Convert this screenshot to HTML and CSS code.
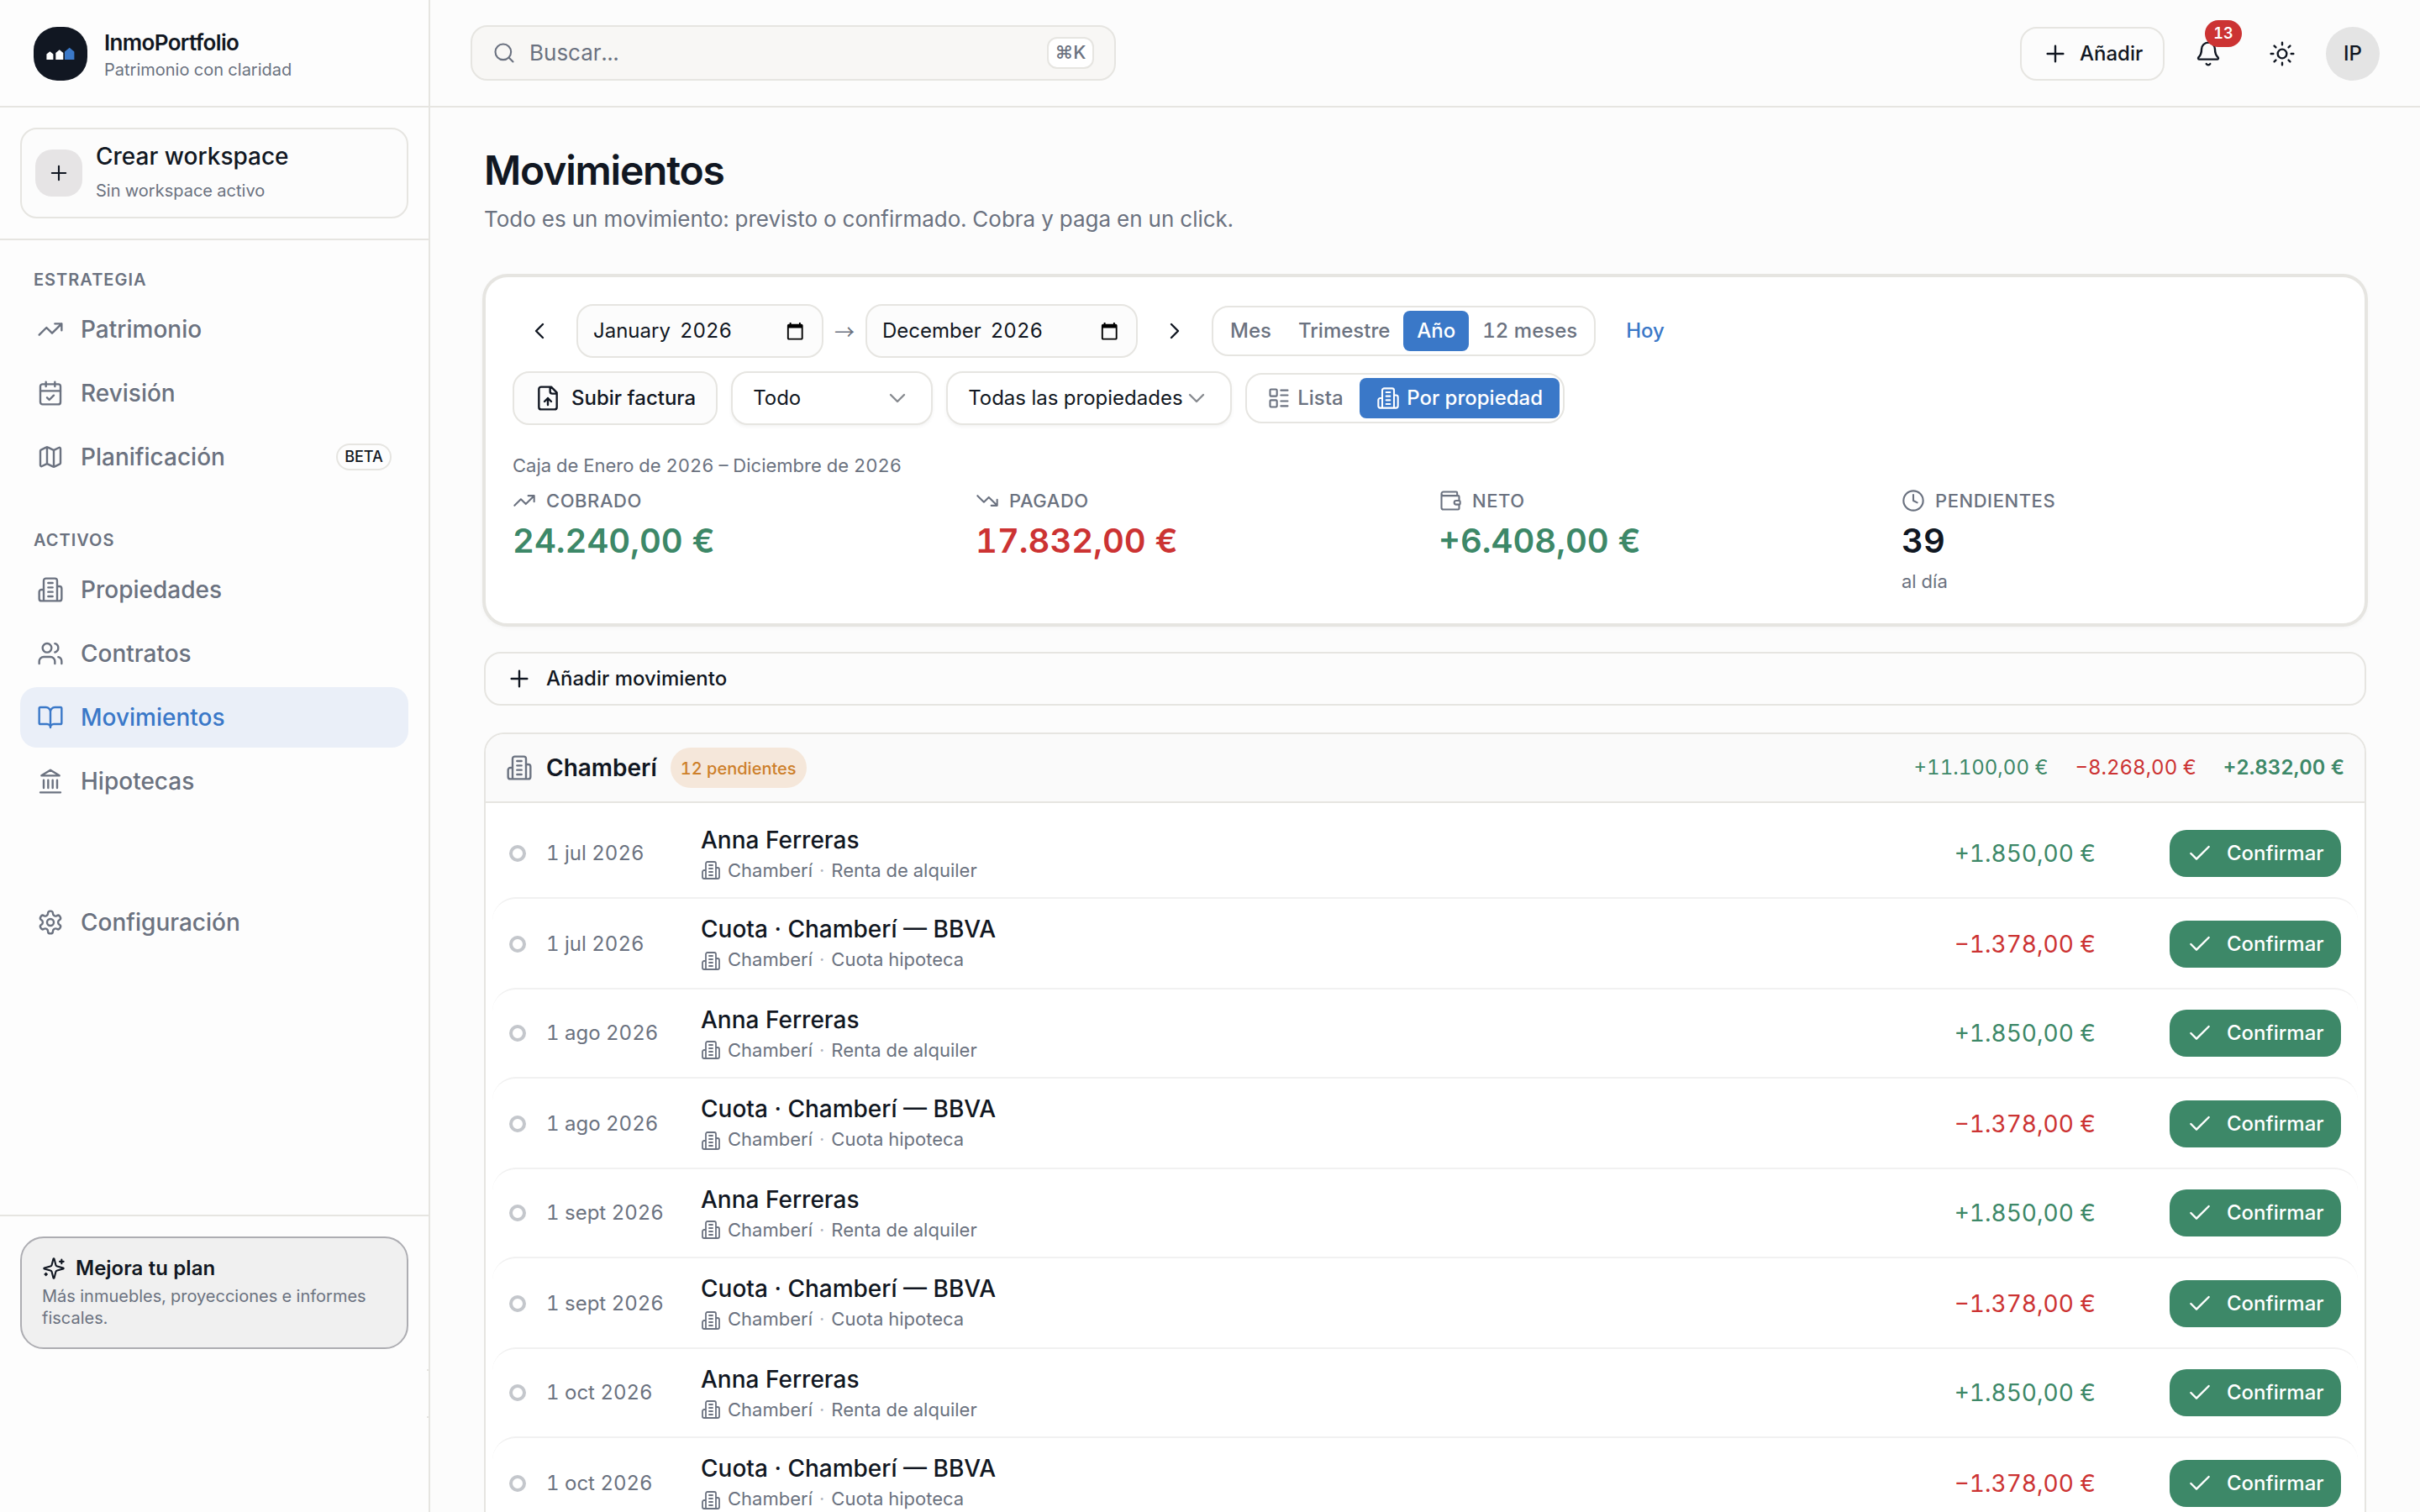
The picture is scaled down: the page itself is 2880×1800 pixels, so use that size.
FILE: index.html
```html
<!DOCTYPE html>
<html lang="es">
<head>
<meta charset="utf-8">
<title>InmoPortfolio</title>
<link rel="stylesheet" href="styles.css">
</head>
<body>
<svg class="sprite" aria-hidden="true">
  <symbol id="plus" viewBox="0 0 24 24"><path d="M5 12h14M12 5v14"/></symbol>
  <symbol id="trending-up" viewBox="0 0 24 24"><path d="M22 7l-8.5 8.5-5-5L2 17M16 7h6v6"/></symbol>
  <symbol id="trending-down" viewBox="0 0 24 24"><path d="M22 17l-8.5-8.5-5 5L2 7M16 17h6v-6"/></symbol>
  <symbol id="calendar-check" viewBox="0 0 24 24"><path d="M8 2v4M16 2v4M3 10h18M9 16l2 2 4-4"/><rect x="3" y="4" width="18" height="18" rx="2"/></symbol>
  <symbol id="map" viewBox="0 0 24 24"><path d="M14.106 5.553a2 2 0 0 0 1.788 0l3.659-1.83A1 1 0 0 1 21 4.619v12.764a1 1 0 0 1-.553.894l-4.553 2.277a2 2 0 0 1-1.788 0l-4.212-2.106a2 2 0 0 0-1.788 0l-3.659 1.83A1 1 0 0 1 3 19.381V6.618a1 1 0 0 1 .553-.894l4.553-2.277a2 2 0 0 1 1.788 0zM15 5.764v15M9 3.236v15"/></symbol>
  <symbol id="building" viewBox="0 0 24 24"><path d="M6 22V4a2 2 0 0 1 2-2h8a2 2 0 0 1 2 2v18ZM6 12H4a2 2 0 0 0-2 2v6a2 2 0 0 0 2 2h2M18 9h2a2 2 0 0 1 2 2v9a2 2 0 0 1-2 2h-2M10 6h4M10 10h4M10 14h4M10 18h4"/></symbol>
  <symbol id="users" viewBox="0 0 24 24"><path d="M16 21v-2a4 4 0 0 0-4-4H6a4 4 0 0 0-4 4v2M22 21v-2a4 4 0 0 0-3-3.87M16 3.13a4 4 0 0 1 0 7.75"/><circle cx="9" cy="7" r="4"/></symbol>
  <symbol id="book-open" viewBox="0 0 24 24"><path d="M12 7v14M3 18a1 1 0 0 1-1-1V4a1 1 0 0 1 1-1h5a4 4 0 0 1 4 4 4 4 0 0 1 4-4h5a1 1 0 0 1 1 1v13a1 1 0 0 1-1 1h-6a3 3 0 0 0-3 3 3 3 0 0 0-3-3z"/></symbol>
  <symbol id="landmark" viewBox="0 0 24 24"><path d="M3 22h18M6 18v-7M10 18v-7M14 18v-7M18 18v-7M12 2l8 5H4z"/></symbol>
  <symbol id="settings" viewBox="0 0 24 24"><path d="M12.22 2h-.44a2 2 0 0 0-2 2v.18a2 2 0 0 1-1 1.73l-.43.25a2 2 0 0 1-2 0l-.15-.08a2 2 0 0 0-2.73.73l-.22.38a2 2 0 0 0 .73 2.73l.15.1a2 2 0 0 1 1 1.72v.51a2 2 0 0 1-1 1.74l-.15.09a2 2 0 0 0-.73 2.73l.22.38a2 2 0 0 0 2.73.73l.15-.08a2 2 0 0 1 2 0l.43.25a2 2 0 0 1 1 1.73V20a2 2 0 0 0 2 2h.44a2 2 0 0 0 2-2v-.18a2 2 0 0 1 1-1.73l.43-.25a2 2 0 0 1 2 0l.15.08a2 2 0 0 0 2.73-.73l.22-.39a2 2 0 0 0-.73-2.73l-.15-.08a2 2 0 0 1-1-1.74v-.5a2 2 0 0 1 1-1.74l.15-.09a2 2 0 0 0 .73-2.73l-.22-.38a2 2 0 0 0-2.73-.73l-.15.08a2 2 0 0 1-2 0l-.43-.25a2 2 0 0 1-1-1.73V4a2 2 0 0 0-2-2z"/><circle cx="12" cy="12" r="3"/></symbol>
  <symbol id="sparkles" viewBox="0 0 24 24"><path d="M9.937 15.5A2 2 0 0 0 8.5 14.063l-6.135-1.582a.5.5 0 0 1 0-.962L8.5 9.936A2 2 0 0 0 9.937 8.5l1.582-6.135a.5.5 0 0 1 .963 0L14.063 8.5A2 2 0 0 0 15.5 9.937l6.135 1.581a.5.5 0 0 1 0 .964L15.5 14.063a2 2 0 0 0-1.437 1.437l-1.582 6.135a.5.5 0 0 1-.963 0zM20 3v4M22 5h-4M4 17v2M5 18H3"/></symbol>
  <symbol id="search" viewBox="0 0 24 24"><circle cx="11" cy="11" r="8"/><path d="m21 21-4.3-4.3"/></symbol>
  <symbol id="bell" viewBox="0 0 24 24"><path d="M10.268 21a2 2 0 0 0 3.464 0M3.262 15.326A1 1 0 0 0 4 17h16a1 1 0 0 0 .74-1.673C19.41 13.956 18 12.499 18 8A6 6 0 0 0 6 8c0 4.499-1.411 5.956-2.738 7.326"/></symbol>
  <symbol id="sun" viewBox="0 0 24 24"><circle cx="12" cy="12" r="4"/><path d="M12 2v2M12 20v2M4.93 4.93l1.41 1.41M17.66 17.66l1.41 1.41M2 12h2M20 12h2M6.34 17.66l-1.41 1.41M19.07 4.93l-1.41 1.41"/></symbol>
  <symbol id="chevron-left" viewBox="0 0 24 24"><path d="m15 18-6-6 6-6"/></symbol>
  <symbol id="chevron-right" viewBox="0 0 24 24"><path d="m9 18 6-6-6-6"/></symbol>
  <symbol id="chevron-down" viewBox="0 0 24 24"><path d="m6 9 6 6 6-6"/></symbol>
  <symbol id="calendar" viewBox="0 0 24 24"><path d="M20 3h-1V1h-2v2H7V1H5v2H4c-1.1 0-2 .9-2 2v16c0 1.1.9 2 2 2h16c1.1 0 2-.9 2-2V5c0-1.1-.9-2-2-2zm0 18H4V8h16v13z"/></symbol>
  <symbol id="file-up" viewBox="0 0 24 24"><path d="M15 2H6a2 2 0 0 0-2 2v16a2 2 0 0 0 2 2h12a2 2 0 0 0 2-2V7ZM14 2v4a2 2 0 0 0 2 2h4M12 12v6M15 15l-3-3-3 3"/></symbol>
  <symbol id="layout-list" viewBox="0 0 24 24"><rect x="3" y="3" width="7" height="7" rx="1"/><rect x="3" y="14" width="7" height="7" rx="1"/><path d="M14 4h7M14 9h7M14 15h7M14 20h7"/></symbol>
  <symbol id="wallet" viewBox="0 0 24 24"><path d="M19 7V4a1 1 0 0 0-1-1H5a2 2 0 0 0 0 4h15a1 1 0 0 1 1 1v4h-3a2 2 0 0 0 0 4h3a1 1 0 0 0 1-1v-2a1 1 0 0 0-1-1M3 5v14a2 2 0 0 0 2 2h15a1 1 0 0 0 1-1v-4"/></symbol>
  <symbol id="clock" viewBox="0 0 24 24"><circle cx="12" cy="12" r="10"/><path d="M12 6v6l4 2"/></symbol>
  <symbol id="check" viewBox="0 0 24 24"><path d="M20 6 9 17l-5-5"/></symbol>
</svg>

<div class="app">
  <aside class="sidebar">
    <div class="brand">
      <svg class="logo" viewBox="0 0 64 64"><rect width="64" height="64" rx="28" fill="#111722"/><path d="M15.4 39v-6.500l4-3.300 4 3.300V39z" fill="#fff"/><path d="M26.300 39v-8l4.500-3.700 4.500 3.700v8z" fill="#fff"/><path d="M37 39V29.500l5.700-4.700 5.700 4.700V39z" fill="#3a78c8"/></svg>
      <div class="brand-text"><div class="brand-name">InmoPortfolio</div><div class="brand-tag">Patrimonio con claridad</div></div>
    </div>
    <div class="workspace">
      <button class="workspace-card">
        <span class="workspace-icon"><svg class="i i28"><use href="#plus"/></svg></span>
        <span class="workspace-text"><span class="workspace-title">Crear workspace</span><span class="workspace-sub">Sin workspace activo</span></span>
      </button>
    </div>
    <nav class="nav">
      <div class="nav-heading">ESTRATEGIA</div>
      <a class="nav-item"><svg class="i i32"><use href="#trending-up"/></svg>Patrimonio</a>
      <a class="nav-item"><svg class="i i32"><use href="#calendar-check"/></svg>Revisión</a>
      <a class="nav-item"><svg class="i i32"><use href="#map"/></svg>Planificación<span class="beta">BETA</span></a>
      <div class="nav-heading second">ACTIVOS</div>
      <a class="nav-item"><svg class="i i32"><use href="#building"/></svg>Propiedades</a>
      <a class="nav-item"><svg class="i i32"><use href="#users"/></svg>Contratos</a>
      <a class="nav-item active"><svg class="i i32"><use href="#book-open"/></svg>Movimientos</a>
      <a class="nav-item"><svg class="i i32"><use href="#landmark"/></svg>Hipotecas</a>
      <a class="nav-item config"><svg class="i i32"><use href="#settings"/></svg>Configuración</a>
    </nav>
    <div class="sidebar-foot">
      <div class="upgrade">
        <div class="upgrade-title"><svg class="i i28"><use href="#sparkles"/></svg>Mejora tu plan</div>
        <div class="upgrade-text">Más inmuebles, proyecciones e informes fiscales.</div>
      </div>
    </div>
    <span class="rail"></span>
  </aside>

  <div class="page">
    <header class="topbar">
      <div class="search"><svg class="i i28"><use href="#search"/></svg><span class="search-text">Buscar...</span><kbd class="kbd">⌘K</kbd></div>
      <div class="actions">
        <button class="btn add"><svg class="i i32"><use href="#plus"/></svg>Añadir</button>
        <button class="icon-btn bell"><svg class="i i32"><use href="#bell"/></svg><span class="count">13</span></button>
        <button class="icon-btn sun"><svg class="i i32"><use href="#sun"/></svg></button>
        <span class="avatar">IP</span>
      </div>
    </header>

    <main class="main">
      <h1 class="title">Movimientos</h1>
      <p class="subtitle">Todo es un movimiento: previsto o confirmado. Cobra y paga en un click.</p>

      <section class="panel">
        <div class="filters period">
          <button class="icon-btn"><svg class="i i32"><use href="#chevron-left"/></svg></button>
          <span class="month from"><span>January</span><span>2026</span><svg class="cal"><use href="#calendar"/></svg></span>
          <span class="arrow">→</span>
          <span class="month to"><span>December</span><span>2026</span><svg class="cal"><use href="#calendar"/></svg></span>
          <button class="icon-btn"><svg class="i i32"><use href="#chevron-right"/></svg></button>
          <div class="segmented"><span class="seg">Mes</span><span class="seg">Trimestre</span><span class="seg on">Año</span><span class="seg">12 meses</span></div>
          <button class="today">Hoy</button>
        </div>
        <div class="filters">
          <button class="btn"><svg class="i i32"><use href="#file-up"/></svg>Subir factura</button>
          <span class="select kind">Todo<svg class="i i32"><use href="#chevron-down"/></svg></span>
          <span class="select property">Todas las propiedades<svg class="i i32"><use href="#chevron-down"/></svg></span>
          <div class="segmented views"><span class="seg list"><svg class="i i28"><use href="#layout-list"/></svg>Lista</span><span class="seg on"><svg class="i i28"><use href="#building"/></svg>Por propiedad</span></div>
        </div>
        <div class="range">Caja de Enero de 2026 – Diciembre de 2026</div>
        <div class="stats">
          <div class="stat"><div class="stat-label"><svg class="i i28"><use href="#trending-up"/></svg>COBRADO</div><div class="stat-value pos">24.240,00 €</div></div>
          <div class="stat"><div class="stat-label"><svg class="i i28"><use href="#trending-down"/></svg>PAGADO</div><div class="stat-value neg">17.832,00 €</div></div>
          <div class="stat"><div class="stat-label"><svg class="i i28"><use href="#wallet"/></svg>NETO</div><div class="stat-value pos">+6.408,00 €</div></div>
          <div class="stat"><div class="stat-label"><svg class="i i28"><use href="#clock"/></svg>PENDIENTES</div><div class="stat-value">39</div><div class="stat-note">al día</div></div>
        </div>
      </section>

      <button class="add-row"><svg class="i i32"><use href="#plus"/></svg>Añadir movimiento</button>

      <section class="group">
        <div class="group-head">
          <svg class="i i32"><use href="#building"/></svg>
          <h2 class="group-name">Chamberí</h2>
          <span class="pending">12 pendientes</span>
          <div class="totals"><span class="pos">+11.100,00 €</span><span class="neg">−8.268,00 €</span><span class="pos strong">+2.832,00 €</span></div>
        </div>
        <div class="rows">
          <div class="row"><span class="dot"></span><span class="date">1 jul 2026</span><div class="what"><div class="name">Anna Ferreras</div><div class="meta"><svg class="i i24"><use href="#building"/></svg><span>Chamberí</span><span class="sep">·</span><span>Renta de alquiler</span></div></div><span class="amount pos">+1.850,00 €</span><button class="confirm"><svg class="i i32"><use href="#check"/></svg>Confirmar</button></div>
          <div class="row"><span class="dot"></span><span class="date">1 jul 2026</span><div class="what"><div class="name">Cuota · Chamberí — BBVA</div><div class="meta"><svg class="i i24"><use href="#building"/></svg><span>Chamberí</span><span class="sep">·</span><span>Cuota hipoteca</span></div></div><span class="amount neg">−1.378,00 €</span><button class="confirm"><svg class="i i32"><use href="#check"/></svg>Confirmar</button></div>
          <div class="row"><span class="dot"></span><span class="date">1 ago 2026</span><div class="what"><div class="name">Anna Ferreras</div><div class="meta"><svg class="i i24"><use href="#building"/></svg><span>Chamberí</span><span class="sep">·</span><span>Renta de alquiler</span></div></div><span class="amount pos">+1.850,00 €</span><button class="confirm"><svg class="i i32"><use href="#check"/></svg>Confirmar</button></div>
          <div class="row"><span class="dot"></span><span class="date">1 ago 2026</span><div class="what"><div class="name">Cuota · Chamberí — BBVA</div><div class="meta"><svg class="i i24"><use href="#building"/></svg><span>Chamberí</span><span class="sep">·</span><span>Cuota hipoteca</span></div></div><span class="amount neg">−1.378,00 €</span><button class="confirm"><svg class="i i32"><use href="#check"/></svg>Confirmar</button></div>
          <div class="row"><span class="dot"></span><span class="date">1 sept 2026</span><div class="what"><div class="name">Anna Ferreras</div><div class="meta"><svg class="i i24"><use href="#building"/></svg><span>Chamberí</span><span class="sep">·</span><span>Renta de alquiler</span></div></div><span class="amount pos">+1.850,00 €</span><button class="confirm"><svg class="i i32"><use href="#check"/></svg>Confirmar</button></div>
          <div class="row"><span class="dot"></span><span class="date">1 sept 2026</span><div class="what"><div class="name">Cuota · Chamberí — BBVA</div><div class="meta"><svg class="i i24"><use href="#building"/></svg><span>Chamberí</span><span class="sep">·</span><span>Cuota hipoteca</span></div></div><span class="amount neg">−1.378,00 €</span><button class="confirm"><svg class="i i32"><use href="#check"/></svg>Confirmar</button></div>
          <div class="row"><span class="dot"></span><span class="date">1 oct 2026</span><div class="what"><div class="name">Anna Ferreras</div><div class="meta"><svg class="i i24"><use href="#building"/></svg><span>Chamberí</span><span class="sep">·</span><span>Renta de alquiler</span></div></div><span class="amount pos">+1.850,00 €</span><button class="confirm"><svg class="i i32"><use href="#check"/></svg>Confirmar</button></div>
          <div class="row"><span class="dot"></span><span class="date">1 oct 2026</span><div class="what"><div class="name">Cuota · Chamberí — BBVA</div><div class="meta"><svg class="i i24"><use href="#building"/></svg><span>Chamberí</span><span class="sep">·</span><span>Cuota hipoteca</span></div></div><span class="amount neg">−1.378,00 €</span><button class="confirm"><svg class="i i32"><use href="#check"/></svg>Confirmar</button></div>
        </div>
      </section>
    </main>
  </div>
</div>
</body>
</html>
```

FILE: styles.css
```css
:root {
  --ink: #111722;
  --muted: #6b7280;
  --line: #e6e5e1;
  --bg: #fcfcfc;
  --blue: #3a78c8;
  --green: #3d8868;
  --red: #cc3333;
}

* { box-sizing: border-box; }

body {
  margin: 0;
  font-family: Inter, "Liberation Sans", sans-serif;
  font-size: 24px;
  line-height: 32px;
  color: var(--ink);
  background: var(--bg);
  font-feature-settings: "tnum";
}

h1, h2, p { margin: 0; }

button {
  font: inherit;
  font-feature-settings: inherit;
  color: inherit;
  background: none;
  border: 0;
  padding: 0;
  text-align: left;
}

.sprite { display: none; }

.i {
  flex: none;
  display: block;
  fill: none;
  stroke: currentColor;
  stroke-width: 1.8;
  stroke-linecap: round;
  stroke-linejoin: round;
}
.i24 { width: 24px; height: 24px; }
.i28 { width: 28px; height: 28px; }
.i32 { width: 32px; height: 32px; }

.pos { color: var(--green); }
.neg { color: var(--red); }

.app {
  display: flex;
  height: 1800px;
  overflow: hidden;
}

/* Sidebar */
.sidebar {
  position: relative;
  flex: none;
  width: 512px;
  display: flex;
  flex-direction: column;
  border-right: 2px solid var(--line);
  background: #fdfdfd;
}
.brand {
  flex: none;
  height: 128px;
  display: flex;
  align-items: flex-start;
  gap: 20px;
  padding: 32px 40px 0;
  border-bottom: 2px solid var(--line);
}
.logo { width: 64px; height: 64px; }
.brand-text { padding-top: 3px; }
.brand-name { font-size: 26px; line-height: 31px; font-weight: 600; letter-spacing: -0.025em; }
.brand-tag { margin-top: 2px; font-size: 20px; line-height: 30px; color: var(--muted); }

.workspace { flex: none; padding: 24px; border-bottom: 2px solid var(--line); }
.workspace-card {
  width: 100%;
  height: 108px;
  display: flex;
  align-items: center;
  gap: 16px;
  padding: 0 16px;
  border: 2px solid var(--line);
  border-radius: 20px;
  background: var(--bg);
}
.workspace-icon {
  width: 56px;
  height: 56px;
  display: grid;
  place-items: center;
  border-radius: 20px;
  background: #e6e4e5;
}
.workspace-text { align-self: flex-start; display: flex; flex-direction: column; padding-top: 12px; }
.workspace-title { font-size: 28px; line-height: 40px; font-weight: 500; }
.workspace-sub { margin-top: 6px; font-size: 20px; line-height: 30px; color: var(--muted); }

.nav { flex: 1; display: flex; flex-direction: column; gap: 4px; padding: 32px 24px 0; }
.nav-heading {
  margin-bottom: 4px;
  padding: 0 16px;
  font-size: 20px;
  line-height: 30px;
  font-weight: 600;
  letter-spacing: 0.05em;
  color: var(--muted);
}
.nav-heading.second { margin-top: 44px; }
.nav-item {
  height: 72px;
  display: flex;
  align-items: center;
  gap: 20px;
  padding: 0 20px;
  border-radius: 20px;
  font-size: 28px;
  line-height: 40px;
  font-weight: 500;
  color: var(--muted);
}
.nav-item.active { background: #eaeff8; color: var(--blue); }
.nav-item.config { margin-top: 92px; }
.beta {
  width: 66px;
  height: 32px;
  margin-left: auto;
  border: 2px solid var(--line);
  border-radius: 16px;
  font-size: 18px;
  line-height: 28px;
  text-align: center;
  color: var(--ink);
}

.sidebar-foot { flex: none; height: 354px; padding: 24px; border-top: 2px solid var(--line); }
.upgrade {
  height: 134px;
  padding: 22px 24px;
  border: 2px solid #adadb2;
  border-radius: 28px;
  background: #f0f0f0;
}
.upgrade-title { display: flex; align-items: center; gap: 12px; height: 28px; line-height: 28px; font-weight: 600; }
.upgrade-text { margin-top: 6px; font-size: 20px; line-height: 26px; color: var(--muted); }

.rail {
  position: absolute;
  right: 0;
  bottom: 112px;
  width: 2px;
  height: 58px;
  border: solid var(--line);
  border-width: 2px 0;
}

/* Top bar */
.page { flex: 1; min-width: 0; display: flex; flex-direction: column; }
.topbar {
  flex: none;
  height: 128px;
  display: flex;
  align-items: center;
  justify-content: space-between;
  padding: 0 48px;
  border-bottom: 2px solid var(--line);
}
.search {
  width: 768px;
  height: 66px;
  display: flex;
  align-items: center;
  padding: 0 24px;
  border: 2px solid var(--line);
  border-radius: 20px;
  background: #f8f7f5;
  color: var(--muted);
}
.search-text { margin-left: 16px; font-size: 26px; line-height: 32px; }
.kbd {
  width: 56px;
  height: 38px;
  margin-left: auto;
  border: 2px solid var(--line);
  border-radius: 12px;
  background: #fff;
  font: 500 22px/32px Inter, "Liberation Sans", sans-serif;
  text-align: center;
  white-space: nowrap;
}
.actions { display: flex; align-items: center; gap: 20px; padding-top: 2px; }
.btn {
  height: 64px;
  display: flex;
  align-items: center;
  gap: 12px;
  padding: 0 24px;
  border: 2px solid var(--line);
  border-radius: 20px;
  background: var(--bg);
  font-weight: 500;
}
.btn.add { width: 172px; gap: 13px; }
.icon-btn { position: relative; width: 64px; height: 64px; display: grid; place-items: center; }
.icon-btn.bell { margin-right: 4px; }
.count {
  position: absolute;
  top: -8px;
  right: -8px;
  width: 44px;
  height: 32px;
  border-radius: 16px;
  background: var(--red);
  color: #fff;
  font-size: 18px;
  line-height: 32px;
  font-weight: 600;
  text-align: center;
}
.avatar {
  width: 64px;
  height: 64px;
  border-radius: 50%;
  background: #e4e4e4;
  line-height: 64px;
  font-weight: 500;
  text-align: center;
}

/* Content */
.main { padding: 45px 64px 0; }
.title { font-size: 48px; line-height: 59px; font-weight: 600; letter-spacing: -0.025em; }
.subtitle { margin-top: 9px; font-size: 26px; line-height: 39px; color: var(--muted); }

.panel {
  height: 416px;
  margin-top: 48px;
  padding: 32px;
  border: 2px solid var(--line);
  border-radius: 28px;
  background: #fff;
  box-shadow: 0 0 0 2px var(--line), 0 2px 6px rgba(0, 0, 0, 0.06);
}
.filters { display: flex; align-items: center; gap: 16px; margin-bottom: 16px; height: 64px; }
.filters.period { gap: 12px; }
.month {
  height: 64px;
  display: flex;
  align-items: center;
  gap: 11px;
  padding: 0 21px 0 18px;
  border: 2px solid var(--line);
  border-radius: 20px;
  background: var(--bg);
}
.month.from { width: 294px; }
.month.to { width: 324px; }
.cal { width: 22.5px; height: 22.5px; margin-left: auto; fill: #000; }
.arrow { width: 26px; font-family: "Noto Sans CJK JP", sans-serif; text-align: center; color: var(--muted); }
.segmented {
  height: 60px;
  display: flex;
  align-items: center;
  padding: 4px;
  border: 2px solid var(--line);
  border-radius: 20px;
  background: #fff;
}
.seg {
  height: 48px;
  display: flex;
  align-items: center;
  gap: 8px;
  padding: 0 16px;
  border-radius: 8px;
  font-weight: 500;
  color: var(--muted);
}
.seg.on { background: var(--blue); color: #fff; }
.views .seg { padding: 0 20px; }
.views .seg.list { width: 130px; }
.today { padding: 0 24px; color: var(--blue); font-weight: 500; }
.select {
  height: 64px;
  display: flex;
  align-items: center;
  justify-content: space-between;
  padding: 0 24px;
  border: 2px solid var(--line);
  border-radius: 20px;
  background: #fff;
  box-shadow: 0 2px 4px rgba(0, 0, 0, 0.05);
}
.select.kind { width: 240px; }
.select.property { width: 340px; }
.select .i { opacity: 0.5; }

.range { margin-top: 32px; font-size: 22px; line-height: 32px; color: var(--muted); }
.stats { display: grid; grid-template-columns: repeat(4, 1fr); gap: 32px; margin-top: 10px; }
.stat-label {
  display: flex;
  align-items: center;
  gap: 12px;
  height: 32px;
  font-size: 22px;
  line-height: 32px;
  font-weight: 500;
  letter-spacing: 0.025em;
  color: var(--muted);
}
.stat-value { margin-top: 6px; font-size: 40px; line-height: 51px; font-weight: 600; }
.stat-note { margin-top: 7px; font-size: 22px; line-height: 32px; color: var(--muted); }

.add-row {
  width: 100%;
  height: 64px;
  display: flex;
  align-items: center;
  gap: 16px;
  margin-top: 32px;
  padding: 0 24px;
  border: 2px solid var(--line);
  border-radius: 20px;
  font-weight: 500;
}

.group { margin-top: 32px; border: 2px solid var(--line); border-radius: 24px; background: #fff; overflow: hidden; }
.group-head {
  height: 82px;
  display: flex;
  align-items: center;
  gap: 16px;
  padding: 0 24px;
  border-bottom: 2px solid var(--line);
  background: #fafafa;
}
.group-head > .i { color: var(--muted); }
.group-name { font-size: 28px; line-height: 40px; font-weight: 600; }
.pending {
  height: 48px;
  padding: 0 12px;
  border-radius: 24px;
  background: #f5e7da;
  color: #cd7f2a;
  font-size: 20px;
  line-height: 50px;
  font-weight: 500;
}
.totals { display: flex; gap: 32px; margin-left: auto; }
.strong { font-weight: 600; }

.rows { padding: 8px; }
.row {
  height: 106px;
  display: grid;
  grid-template-columns: 20px 160px 1fr auto auto;
  column-gap: 24px;
  align-items: center;
  padding: 0 20px;
  border-top: 2px solid #f1f1f1;
  border-radius: 28px;
}
.row:first-child { height: 104px; border-top: 0; }
.row:nth-child(even) { height: 108px; padding-top: 2px; }
.dot { width: 20px; height: 20px; border: 4px solid #c4c7cc; border-radius: 50%; }
.date { color: var(--muted); }
.what { align-self: start; padding-top: 16px; }
.row:nth-child(even) .what { padding-top: 14px; }
.name { font-size: 28px; line-height: 40px; font-weight: 500; }
.meta { display: flex; align-items: center; gap: 8px; font-size: 22px; line-height: 32px; color: var(--muted); }
.row:nth-child(even) .meta .i { transform: translateY(2px); }
.sep { opacity: 0.5; }
.amount { margin-right: 64px; font-size: 28px; line-height: 40px; }
.confirm {
  width: 204px;
  height: 56px;
  display: flex;
  align-items: center;
  gap: 16px;
  padding-left: 20px;
  border-radius: 20px;
  background: var(--green);
  color: #fff;
  font-weight: 500;
}
```
